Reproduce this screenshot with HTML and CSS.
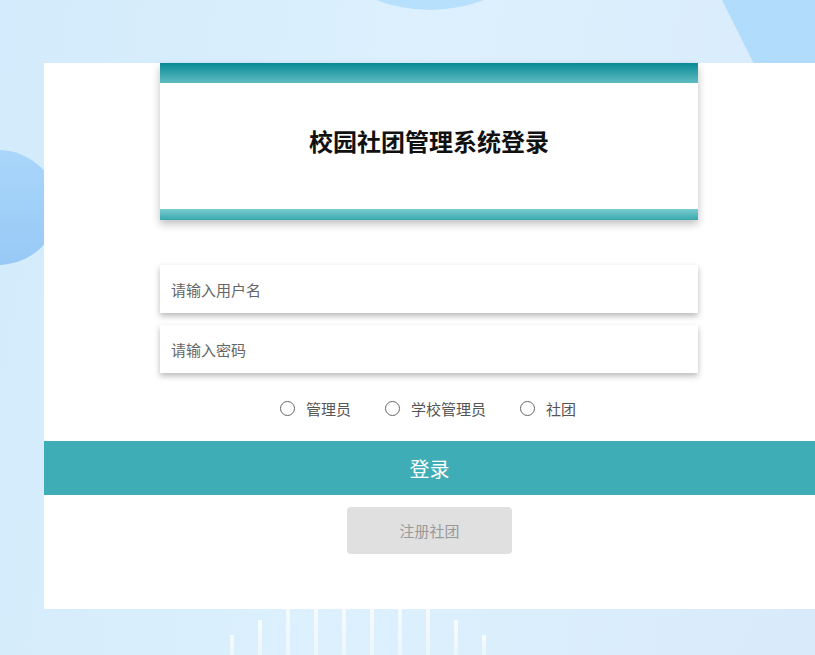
FILE: index.html
```html
<!DOCTYPE html>
<html lang="zh">
<head>
<meta charset="utf-8">
<title>校园社团管理系统登录</title>
<link rel="stylesheet" href="styles.css">
</head>
<body>
<div class="bg">
  <div class="blob blob-top"></div>
  <div class="blob-right"></div>
  <div class="blob blob-left"></div>
  <div class="lines">
    <span style="height:20px"></span><span style="height:35px"></span><span style="height:50px"></span><span style="height:50px"></span><span style="height:50px"></span><span style="height:50px"></span><span style="height:50px"></span><span style="height:50px"></span><span style="height:35px"></span><span style="height:20px"></span>
  </div>
</div>
<div class="page">
  <div class="panel">
    <div class="head-card">
      <div class="bar-top"></div>
      <h1 class="title">校园社团管理系统登录</h1>
      <div class="bar-bottom"></div>
    </div>
    <div class="fields">
      <input class="field" type="text" placeholder="请输入用户名">
      <input class="field" type="password" placeholder="请输入密码">
    </div>
    <div class="roles">
      <label class="role"><span class="radio"></span>管理员</label>
      <label class="role"><span class="radio"></span>学校管理员</label>
      <label class="role"><span class="radio"></span>社团</label>
    </div>
    <button class="login">登录</button>
    <button class="register">注册社团</button>
  </div>
</div>
</body>
</html>
```
FILE: styles.css
```css
html, body {
  margin: 0;
  padding: 0;
  width: 815px;
  height: 655px;
  overflow: hidden;
}
body {
  font-family: "Noto Sans CJK SC", "Liberation Sans", sans-serif;
  background: linear-gradient(100deg, #d3ebfc 0%, #dcf0fd 45%, #d9ebfb 100%);
  position: relative;
}
.bg {
  position: absolute;
  inset: 0;
  overflow: hidden;
}
.blob {
  position: absolute;
  border-radius: 50%;
}
.blob-top {
  width: 300px;
  height: 300px;
  left: 280px;
  top: -290px;
  background: #b6e0fb;
}
.blob-right {
  position: absolute;
  left: 700px;
  top: 0;
  width: 115px;
  height: 80px;
  background: #b2dcfb;
  clip-path: polygon(22px 0, 115px 0, 115px 80px, 62px 80px);
}
.blob-left {
  width: 120px;
  height: 115px;
  left: -62px;
  top: 150px;
  background: linear-gradient(#a9d6fa, #98c9f6);
}
.lines {
  position: absolute;
  left: 230px;
  bottom: 0;
  display: flex;
  align-items: flex-end;
  gap: 24px;
}
.lines span {
  display: block;
  width: 4px;
  background: linear-gradient(#ffffff, rgba(255,255,255,0.6));
  opacity: 0.75;
}
.page {
  position: relative;
  padding-top: 63px;
  padding-left: 44px;
}
.panel {
  width: 790px;
  height: 546px;
  background: #fff;
  display: flex;
  flex-direction: column;
}
.head-card {
  margin-left: 116px;
  width: 538px;
  height: 157px;
  background: #fff;
  box-shadow: 0 4px 8px rgba(0,0,0,0.25);
  display: flex;
  flex-direction: column;
}
.bar-top {
  height: 20px;
  background: linear-gradient(#078a95, #5fbcc1);
}
.title {
  flex: 1;
  margin: 0;
  display: flex;
  align-items: center;
  justify-content: center;
  font-size: 24px;
  font-weight: 700;
  color: #111;
  padding-bottom: 12px;
}
.bar-bottom {
  height: 11px;
  background: linear-gradient(#7acdd0, #38a8ae);
}
.fields {
  margin-top: 45px;
  margin-left: 116px;
  width: 538px;
  display: flex;
  flex-direction: column;
  gap: 12px;
}
.field {
  height: 48px;
  border: none;
  outline: none;
  padding: 0 11px;
  box-sizing: border-box;
  background: #fff;
  box-shadow: 0 3px 6px rgba(0,0,0,0.28);
  font-family: inherit;
  font-size: 15px;
  color: #333;
}
.field::placeholder {
  color: #666;
}
.roles {
  margin-top: 24px;
  margin-left: 236px;
  display: flex;
  gap: 34px;
  height: 22px;
  align-items: center;
}
.role {
  display: flex;
  align-items: center;
  font-size: 15px;
  color: #555;
}
.radio {
  width: 15px;
  height: 15px;
  border: 1px solid #666;
  border-radius: 50%;
  margin-right: 11px;
  box-sizing: border-box;
}
.login {
  margin-top: 22px;
  width: 771px;
  height: 54px;
  border: none;
  background: #3fadb5;
  color: #fff;
  font-family: inherit;
  font-size: 20px;
  padding: 0;
}
.register {
  margin-top: 12px;
  margin-left: 303px;
  width: 165px;
  height: 47px;
  border: none;
  border-radius: 4px;
  background: #e0e0e0;
  color: #999;
  font-family: inherit;
  font-size: 15px;
  padding: 0;
}
```
